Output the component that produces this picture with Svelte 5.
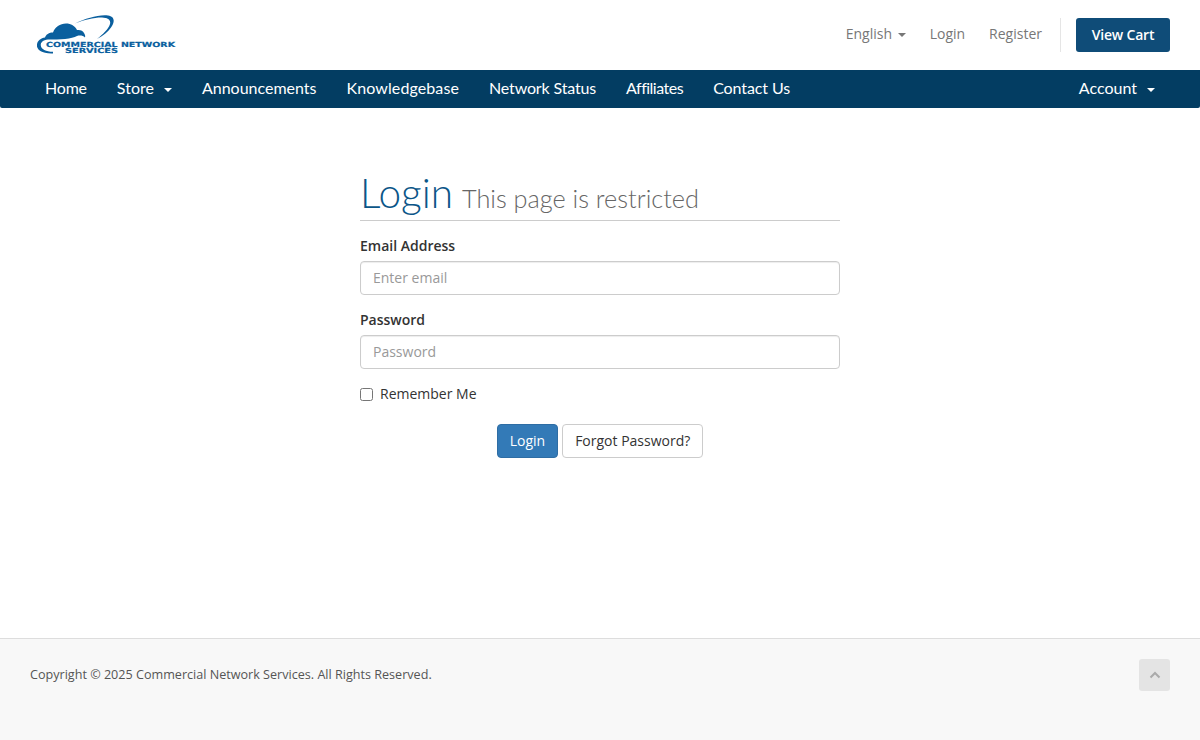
<script>
  const navLeft = [
    { label: 'Home' },
    { label: 'Store', caret: true },
    { label: 'Announcements' },
    { label: 'Knowledgebase' },
    { label: 'Network Status' },
    { label: 'Affiliates' },
    { label: 'Contact Us' }
  ];
</script>

<div class="page">
  <header class="top">
    <a class="logo" href="#home" aria-label="Commercial Network Services">
      <svg width="140" height="40" viewBox="0 0 140 40">
        <path d="M17 38.500 C7 39 0 35 1 29.500 C1.500 25.500 5 23 9 22.500 C10 19.500 13 17.500 17 17.500 C19 12 24 8.500 30 8.500 C35 8.500 39 11 41 15 C44 14.500 47 15.500 48 18 C49 19.500 49.500 21 49 22.500 C47 20.500 44 20 41 21 C36 24 24 24.500 12 24.500 C7 25 4.500 27.500 4.800 30.500 C5 34 10 36.800 17 36.800 Z" fill="#0a5f9e"/>
        <path d="M39 8.500 C50 3.500 62 -0.500 72 0.500 C79 1.500 79 7 75 12.500 C72 17 67 21 61 24 C67 19 72.500 14 74 9 C75 5 72 2.800 66 2.600 C58 2.500 48 5 39 8.500 Z" fill="#0a5f9e"/>
        <text class="lt" x="10" y="31.500" textLength="129" lengthAdjust="spacingAndGlyphs">COMMERCIAL NETWORK</text>
        <text class="lt" x="29" y="38" textLength="53" lengthAdjust="spacingAndGlyphs">SERVICES</text>
      </svg>
    </a>
    <div class="top-right">
      <a href="#en" class="tlink">English <span class="caret small"></span></a>
      <a href="#login" class="tlink">Login</a>
      <a href="#register" class="tlink">Register</a>
      <span class="divider"></span>
      <a href="#cart" class="cart">View Cart</a>
    </div>
  </header>

  <nav class="nav">
    <ul>
      {#each navLeft as item}
        <li><a href="#nav">{item.label}{#if item.caret}<span class="caret"></span>{/if}</a></li>
      {/each}
    </ul>
    <ul>
      <li><a href="#account">Account<span class="caret"></span></a></li>
    </ul>
  </nav>

  <main class="main">
    <form class="login" onsubmit={(e) => e.preventDefault()}>
      <h1>Login <small>This page is restricted</small></h1>
      <div class="group">
        <label for="email">Email Address</label>
        <input id="email" type="email" placeholder="Enter email" />
      </div>
      <div class="group">
        <label for="pw">Password</label>
        <input id="pw" type="password" placeholder="Password" />
      </div>
      <label class="check"><input type="checkbox" /> Remember Me</label>
      <div class="actions">
        <button class="btn primary" type="submit">Login</button>
        <button class="btn" type="button">Forgot Password?</button>
      </div>
    </form>
  </main>

  <footer class="foot">
    <p>Copyright © 2025 Commercial Network Services. All Rights Reserved.</p>
    <a class="up" href="#top" aria-label="Back to top">
      <svg width="12" height="8" viewBox="0 0 12 8"><path d="M1.500 6.500 L6 2 L10.500 6.500" fill="none" stroke="#aaa" stroke-width="2"/></svg>
    </a>
  </footer>
</div>

<style>
  :global(body) {
    margin: 0;
    background: #fff;
    font-family: "Open Sans", "Liberation Sans", sans-serif;
    font-size: 14px;
    color: #333;
  }
  a { text-decoration: none; }
  .page {
    display: flex;
    flex-direction: column;
    height: 740px;
    overflow: hidden;
  }
  .top {
    height: 70px;
    box-sizing: border-box;
    padding: 0 30px 0 36px;
    display: flex;
    justify-content: space-between;
    align-items: center;
  }
  .logo { display: block; height: 40px; }
  .lt {
    font-family: "DejaVu Sans", sans-serif;
    font-weight: 700;
    font-size: 7px;
    fill: #0a5f9e;
    stroke: #0a5f9e;
    stroke-width: 0.2;
  }
  .top-right {
    display: flex;
    align-items: center;
    height: 34px;
  }
  .tlink {
    color: #777;
    font-size: 14px;
    margin-right: 24px;
    line-height: 30px;
    margin-bottom: 2px;
  }
  .divider {
    width: 1px;
    height: 34px;
    background: #e5e5e5;
    margin: 0 15px 0 -6px;
  }
  .cart {
    background: #0f4c78;
    color: #fff;
    font-weight: 600;
    font-size: 14px;
    letter-spacing: -0.2px;
    border-radius: 3px;
    width: 94px;
    height: 34px;
    line-height: 34px;
    text-align: center;
  }
  .caret {
    display: inline-block;
    width: 0;
    height: 0;
    margin-left: 10px;
    vertical-align: middle;
    border-top: 4px solid currentColor;
    border-left: 4px solid transparent;
    border-right: 4px solid transparent;
  }
  .caret.small { margin-left: 2px; }
  .nav {
    height: 38px;
    background: #033d62;
    display: flex;
    justify-content: space-between;
    padding: 0 30px;
    border-radius: 0 0 2px 2px;
  }
  .nav ul {
    list-style: none;
    margin: 0;
    padding: 0;
    display: flex;
  }
  .nav a {
    display: block;
    color: #fff;
    font-family: "Lato", sans-serif;
    font-size: 16px;
    line-height: 35px;
    padding: 0 15px;
  }
  .nav ul:first-child li:nth-child(1) a { letter-spacing: -0.2px; }
  .nav ul:first-child li:nth-child(4) a { letter-spacing: 0.1px; }
  .nav ul:first-child li:nth-child(5) a { letter-spacing: -0.15px; }
  .nav ul:first-child li:nth-child(6) a { letter-spacing: -0.5px; }
  .nav ul:first-child li:nth-child(7) a { letter-spacing: -0.1px; }
  .main {
    flex: 1;
    display: flex;
    justify-content: center;
  }
  .login {
    width: 480px;
    padding-top: 60px;
  }
  h1 {
    margin: 0 0 15px;
    height: 52px;
    border-bottom: 1px solid #ccc;
    font-family: "Lato", sans-serif;
    font-weight: 300;
    font-size: 40.500px;
    line-height: 49px;
    color: #0b5688;
  }
  h1 small {
    font-size: 25.300px;
    font-weight: 300;
    color: #666;
    margin-left: -2px;
  }
  .group { margin-bottom: 15px; }
  .group label {
    display: block;
    font-weight: 600;
    font-size: 14px;
    line-height: 20px;
    margin-bottom: 5px;
  }
  .group input {
    display: block;
    box-sizing: border-box;
    width: 100%;
    height: 34px;
    padding: 5px 12px 7px;
    border: 1px solid #ccc;
    border-radius: 4px;
    box-shadow: inset 0 1px 1px rgba(0,0,0,.075);
    font: inherit;
    color: #555;
    outline: none;
  }
  .group input::placeholder { color: #999; opacity: 1; }
  .check {
    display: flex;
    align-items: center;
    gap: 7px;
    line-height: 20px;
    margin-top: 5px;
    margin-bottom: 20px;
  }
  .check input { margin: 0; width: 13px; height: 13px; }
  .actions {
    display: flex;
    justify-content: center;
    gap: 4px;
  }
  .btn {
    height: 34px;
    padding: 0 12px 2px;
    border: 1px solid #ccc;
    border-radius: 4px;
    background: #fff;
    color: #333;
    font: inherit;
  }
  .btn.primary {
    background: #337ab7;
    border-color: #2e6da4;
    color: #fff;
  }
  .foot {
    height: 102px;
    box-sizing: border-box;
    background: #f8f8f8;
    border-top: 1px solid #ddd;
    padding: 20px 30px 0;
    display: flex;
    justify-content: space-between;
    align-items: flex-start;
  }
  .foot p {
    margin: 0;
    font-size: 12.6px;
    line-height: 31px;
    color: #555;
  }
  .up {
    width: 31px;
    height: 32px;
    background: #e4e4e4;
    border-radius: 3px;
    display: flex;
    align-items: center;
    justify-content: center;
  }
</style>
